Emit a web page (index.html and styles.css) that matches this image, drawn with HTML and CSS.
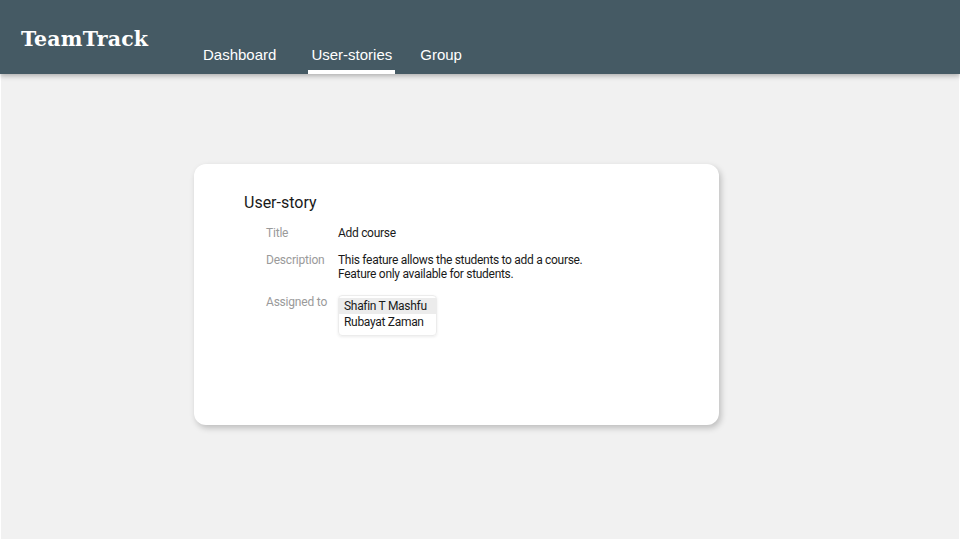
FILE: index.html
```html
<!DOCTYPE html>
<html>
<head>
<meta charset="utf-8">
<link rel="stylesheet" href="styles.css">
</head>
<body>
<header class="topbar">
  <div class="logo">TeamTrack</div>
  <nav class="tabs">
    <a class="tab tab-dash">Dashboard</a>
    <a class="tab active">User-stories</a>
    <a class="tab">Group</a>
  </nav>
</header>
<main class="content">
  <section class="card">
    <h2 class="card-title">User-story</h2>
    <div class="fields">
      <div class="label">Title</div>
      <div class="value">Add course</div>
      <div class="label">Description</div>
      <div class="value">This feature allows the students to add a course.<br>Feature only available for students.</div>
      <div class="label spaced">Assigned to</div>
      <div class="value spaced">
        <div class="listbox">
          <div class="option selected">Shafin T Mashfu</div>
          <div class="option">Rubayat Zaman</div>
        </div>
      </div>
    </div>
  </section>
</main>
</body>
</html>
```

FILE: styles.css
```css
html, body {
  margin: 0;
  padding: 0;
  height: 100%;
  background: #ffffff;
}
body {
  display: flex;
  flex-direction: column;
  font-family: Roboto, "Liberation Sans", sans-serif;
}
.topbar {
  position: relative;
  z-index: 2;
  height: 74px;
  flex: 0 0 auto;
  background: #455a64;
  box-shadow: 0 2px 5px rgba(0, 0, 0, 0.28);
  display: flex;
  align-items: flex-start;
  box-sizing: border-box;
  padding-left: 21px;
}
.logo {
  width: 130px;
  font-family: "DejaVu Serif", serif;
  font-weight: bold;
  font-size: 20.5px;
  color: #ffffff;
  margin-top: 25px;
  line-height: 28px;
  letter-spacing: 0.2px;
  white-space: nowrap;
}
.tabs {
  display: flex;
  margin-left: 49px;
  height: 74px;
  align-items: stretch;
  gap: 22px;
}
.tab {
  font-family: "Liberation Sans", Arial, sans-serif;
  font-size: 15px;
  color: #ffffff;
  padding: 46px 3px 0;
  box-sizing: border-box;
  border-bottom: 4px solid transparent;
  line-height: 18px;
}
.tab-dash {
  margin-right: 7px;
}
.tab.active {
  border-bottom-color: #ffffff;
}
.content {
  flex: 1 1 auto;
  background: #f1f1f1;
  margin: 0 1px 1px;
  padding: 90px 0 0 193px;
}
.card {
  width: 525px;
  height: 261px;
  box-sizing: border-box;
  background: #ffffff;
  border-radius: 12px;
  box-shadow: 2px 3px 6px rgba(0, 0, 0, 0.22);
  padding: 29px 50px 0;
}
.card-title {
  margin: 0 0 13px;
  font-size: 16px;
  font-weight: normal;
  line-height: 20px;
  color: #1a1a1a;
}
.fields {
  margin-left: 22px;
  display: grid;
  grid-template-columns: 72px auto;
  row-gap: 13px;
  font-size: 12px;
  line-height: 14px;
}
.label {
  color: #9a9a9a;
  letter-spacing: -0.2px;
}
.value {
  color: #1a1a1a;
  letter-spacing: -0.3px;
}
.spaced {
  margin-top: 1px;
}
.listbox {
  width: 99px;
  box-sizing: border-box;
  border: 1px solid #ececec;
  border-radius: 4px;
  box-shadow: 0 1px 3px rgba(0, 0, 0, 0.08);
  padding: 2px 0 5px;
}
.option {
  padding: 0 5px;
  line-height: 16px;
  color: #1a1a1a;
}
.option.selected {
  background: #ececec;
}
```
